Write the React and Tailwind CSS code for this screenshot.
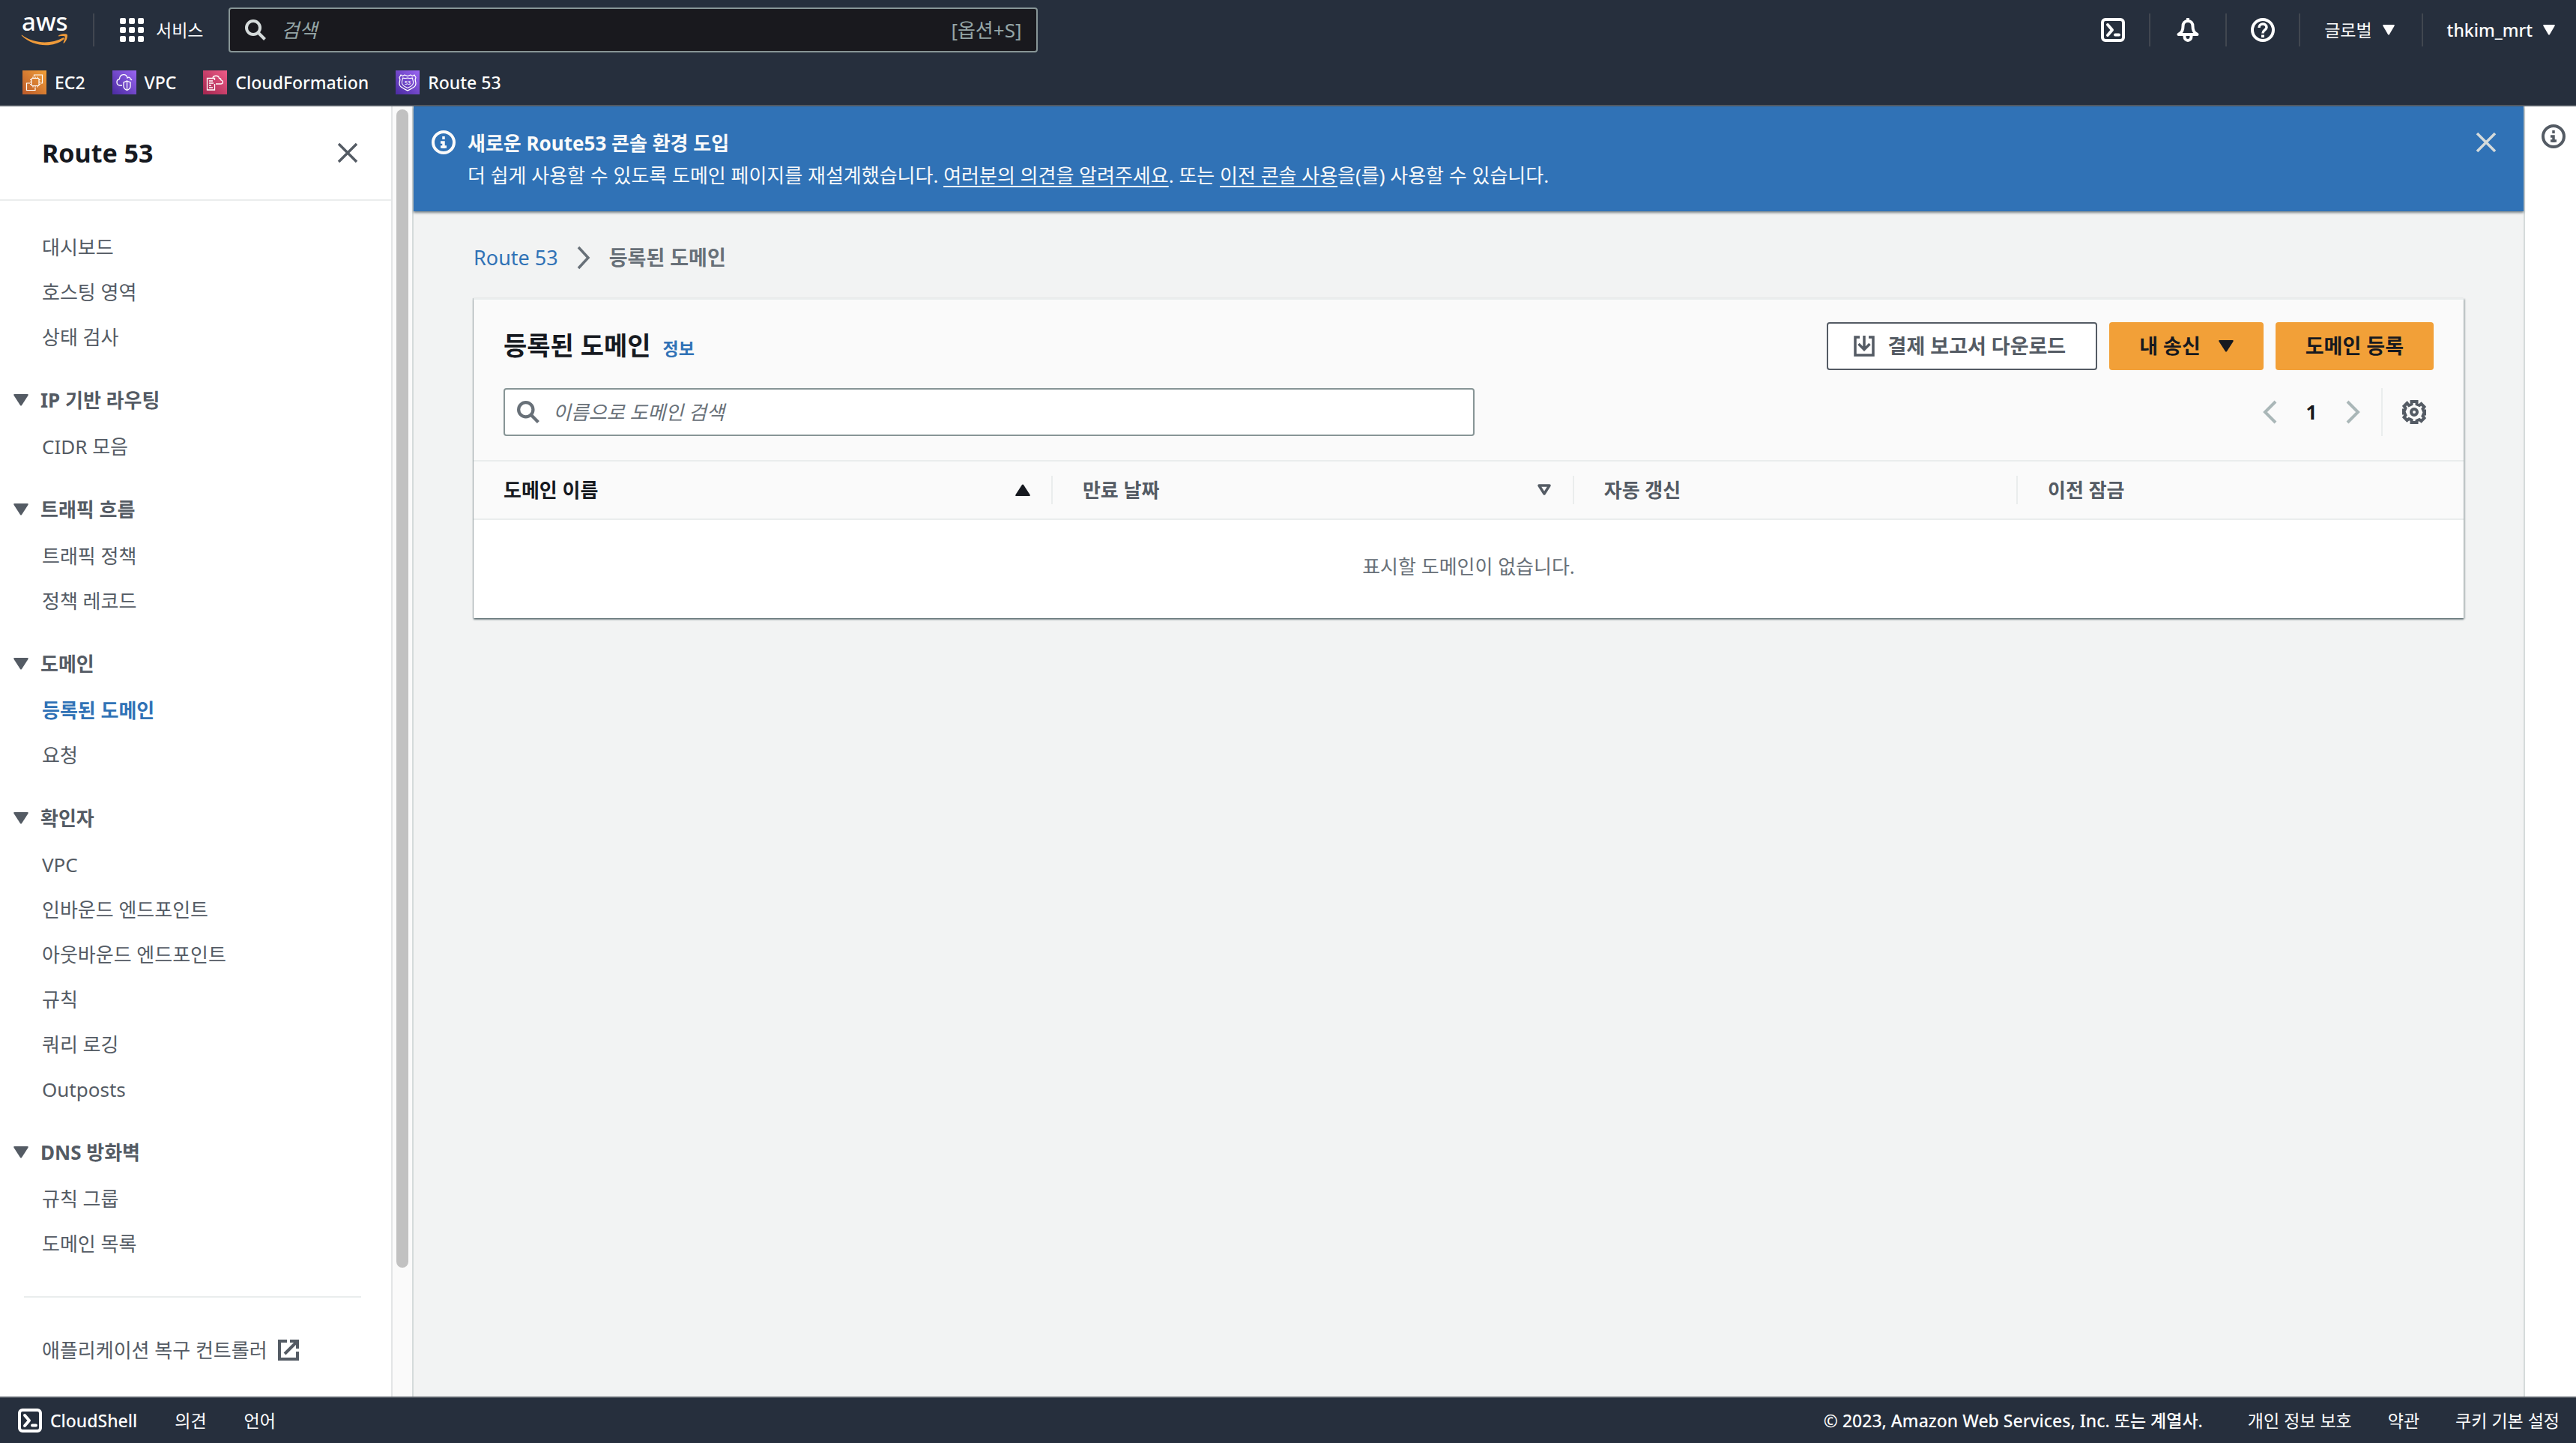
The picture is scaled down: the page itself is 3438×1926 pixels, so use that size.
import React from "react";

const Icon = ({ className = "size-8", children, box = "0 0 32 32" }) => (
  <svg viewBox={box} className={`shrink-0 ${className}`} fill="none" stroke="currentColor" strokeWidth="4" aria-hidden="true">
    {children}
  </svg>
);

const ShellIcon = () => (
  <Icon>
    <rect x="2" y="2" width="28" height="28" rx="4" />
    <path d="M9 9l6 7-6 7" strokeLinecap="round" strokeLinejoin="round" />
    <path d="M19 22.5h5" strokeLinecap="round" />
  </Icon>
);

const BellIcon = () => (
  <Icon>
    <path d="M16 0v4" />
    <path d="M16 4c-4.500 0-6.500 3-6.500 7 0 6-1.500 8-6 11h25c-4.500-3-6-5-6-11 0-4-2-7-6.500-7z" strokeLinejoin="round" />
    <path d="M11.500 22v3a4.500 5 0 0 0 9 0v-3" />
  </Icon>
);

const HelpIcon = () => (
  <Icon>
    <circle cx="16" cy="16" r="14" />
    <path d="M11 13c0-6.500 10-6.500 10-.5 0 3.500-5 3.500-5 8" strokeWidth="3.500" />
    <path d="M16 22.500v3.500" />
  </Icon>
);

const InfoIcon = () => (
  <Icon>
    <circle cx="16" cy="16" r="14" />
    <path d="M16 8v4M12 16h4v8M12 22h8" strokeWidth="3.500" />
  </Icon>
);

const CloseIcon = () => (
  <Icon className="size-7" box="0 0 28 28">
    <path d="M2 2l24 24M26 2L2 26" strokeWidth="3.500" />
  </Icon>
);

const SearchIcon = ({ className }) => (
  <Icon className={className} box="0 0 28 28">
    <circle cx="11" cy="11" r="9" />
    <path d="M17.500 17.500l9 9" />
  </Icon>
);

const Caret = ({ className = "h-3 w-4", up = false }) => (
  <svg viewBox="0 0 20 16" preserveAspectRatio="none" className={`shrink-0 ${className}`} fill="currentColor" aria-hidden="true">
    <path d={up ? "M1.500 16Q-.5 16 .6 14L9 1Q10 0 11 1L19.400 14Q20.500 16 18.500 16z" : "M1.500 0Q-.5 0 .6 2L9 15Q10 16 11 15L19.400 2Q20.500 0 18.500 0z"} />
  </svg>
);

const Ec2Icon = () => (
  <Icon>
    <defs>
      <linearGradient id="ec2" x1="0" y1="1" x2="1" y2="0">
        <stop offset="0" stopColor="#bb5a2b" />
        <stop offset="1" stopColor="#f2a038" />
      </linearGradient>
    </defs>
    <rect width="32" height="32" fill="url(#ec2)" stroke="none" />
    <g stroke="#fff" strokeWidth="1.200">
      <rect x="12" y="10.500" width="10" height="10" rx="1" />
      <path d="M14 8.500v2M17 8.500v2M20 8.500v2M14 20.500v2M17 20.500v2M20 20.500v2M10 12.500h2M10 15.500h2M10 18.500h2M22 12.500h2M22 15.500h2M22 18.500h2" />
      <path d="M15.500 8V6h11v11H24M10 17H5.500v9.500h11.500V23" />
    </g>
  </Icon>
);

const VpcIcon = () => (
  <Icon>
    <defs>
      <linearGradient id="violet" x1="0" y1="1" x2="1" y2="0">
        <stop offset="0" stopColor="#4a2aa0" />
        <stop offset="1" stopColor="#9a66f2" />
      </linearGradient>
    </defs>
    <rect width="32" height="32" fill="url(#violet)" stroke="none" />
    <g stroke="#fff" strokeWidth="1.300">
      <path d="M13 20H10c-5-.5-5.500-7.500-.5-8.500C10 4 19 4 20 10c2.500-2 4 0 4 1.500 1 0 1.500.8 2 1.500" />
      <path d="M19.500 14l4.500 2v5c0 3-2 4.500-4.500 5.500-2.500-1-4.500-2.500-4.500-5.500v-5zM19.500 14v12.500" />
    </g>
  </Icon>
);

const CloudFormationIcon = () => (
  <Icon>
    <defs>
      <linearGradient id="pink" x1="0" y1="1" x2="1" y2="0">
        <stop offset="0" stopColor="#a3264f" />
        <stop offset="1" stopColor="#ee5c88" />
      </linearGradient>
    </defs>
    <rect width="32" height="32" fill="url(#pink)" stroke="none" />
    <g stroke="#fff" strokeWidth="1.300">
      <path d="M15.500 18v8H5.500V10.500h10V13M8 14h5M8 17h6M8 20h3M8 23h5" />
      <path d="M13 10c1-4 8-3.500 8.500.5 2.500 0 2.500 2 2.500 2.500 3.500 1 3 5-.5 5H17" />
    </g>
  </Icon>
);

const Route53Icon = () => (
  <Icon>
    <rect width="32" height="32" fill="url(#violet)" stroke="none" />
    <g stroke="#fff" strokeWidth="1.300" strokeLinejoin="round">
      <path d="M7 6l2.500 1.500L12 6l4 1.500L20 6l2.500 1.500L25 6l2 3.500c-2 3 0 5 0 8 0 5-5 6-11 9.500-6-3.500-11-4.500-11-9.500 0-3 2-5 0-8z" />
      <path d="M9.500 10c3 1 4 .5 6.500 0 2.500.5 3.500 1 6.500 0 0 3 1.500 4 1 7-.5 4-4 4.500-7.500 6.500-3.500-2-7-2.500-7.500-6.500-.5-3 1-4 1-7z" strokeWidth="1.100" />
    </g>
    <text x="16" y="18.500" textAnchor="middle" fontSize="7" fill="#fff" stroke="none" fontFamily="Noto Sans, sans-serif">53</text>
  </Icon>
);

const VRule = () => <span className="h-11 w-0.5 bg-[#414750]" />;

const favorites = [
  ["EC2", Ec2Icon],
  ["VPC", VpcIcon],
  ["CloudFormation", CloudFormationIcon],
  ["Route 53", Route53Icon],
];

const sections = [
  { items: ["대시보드", "호스팅 영역", "상태 검사"] },
  { title: "IP 기반 라우팅", items: ["CIDR 모음"] },
  { title: "트래픽 흐름", items: ["트래픽 정책", "정책 레코드"] },
  { title: "도메인", items: ["등록된 도메인", "요청"] },
  { title: "확인자", items: ["VPC", "인바운드 엔드포인트", "아웃바운드 엔드포인트", "규칙", "쿼리 로깅", "Outposts"] },
  { title: "DNS 방화벽", items: ["규칙 그룹", "도메인 목록"] },
];

function Header() {
  return (
    <header className="border-b-2 border-[#545b64] bg-[#262f3d] text-[23px] leading-8 font-medium text-white">
      <div className="flex h-20 items-center pr-7 pl-7">
        <a href="#home" aria-label="AWS" className="shrink-0">
          <svg viewBox="0 -16 64 76" className="h-[76px] w-16" aria-hidden="true">
            <text x="1" y="23" fontSize="33" fontWeight="500" fill="#fff" fontFamily="Noto Sans, sans-serif">aws</text>
            <path d="M1 28.500C18 41 40 41 56 32.500c1.500-.6 2.500.8 1.200 2C43 46 17 45 1 29.800c-.6-.8 0-1.600 0-1.300z" fill="#ee9a3a" />
            <path d="M50 29.500c4-2.800 11-2.500 11.700-1.300.8 1.500-.2 8-4.200 11.300-.8.500-1.300.2-1-.6 1-2.500 2.800-7 2-8.200-1-1-5.500-.6-7.800-.3-1 0-1.200-.5-.7-.9z" fill="#ee9a3a" />
          </svg>
        </a>
        <span className="ml-8 h-11 w-0.5 bg-[#414750]" />
        <button type="button" className="ml-8.5 flex items-center gap-4 font-normal">
          <svg viewBox="0 0 32 32" className="size-8" fill="currentColor" aria-hidden="true">
            {[0, 12, 24].map((y) => [0, 12, 24].map((x) => <rect key={`${x}-${y}`} x={x} y={y} width="8" height="8" rx="2" />))}
          </svg>
          서비스
        </button>
        <label className="ml-8.5 flex h-[60px] w-[1080px] items-center rounded border-2 border-[#879596] bg-[#19191e] px-5 text-[26px] font-normal text-[#95a5a6]">
          <SearchIcon className="size-7 text-[#d5dbdb]" />
          <input type="search" aria-label="검색" placeholder="검색" className="ml-5 min-w-0 flex-1 bg-transparent outline-none placeholder:text-[#95a5a6] placeholder:italic" />
          <span>[옵션+S]</span>
        </label>
        <div className="ml-auto flex items-center">
          <button type="button" aria-label="CloudShell" className="mr-8"><ShellIcon /></button>
          <VRule />
          <button type="button" aria-label="알림" className="mx-8.5"><BellIcon /></button>
          <VRule />
          <button type="button" aria-label="도움말" className="mx-8"><HelpIcon /></button>
          <VRule />
          <button type="button" className="mr-9 ml-8 flex items-center gap-3.5 font-normal">글로벌 <Caret className="h-3.5 w-4" /></button>
          <VRule />
          <button type="button" className="ml-8 flex items-center gap-3.5">thkim_mrt <Caret className="h-3.5 w-4" /></button>
        </div>
      </div>
      <nav aria-label="즐겨찾기" className="flex h-[60px] items-center gap-9 pl-[30px]">
        {favorites.map(([name, Glyph]) => (
          <a key={name} href="#service" className="flex items-center gap-[11px]"><Glyph />{name}</a>
        ))}
      </nav>
    </header>
  );
}

function Sidebar() {
  return (
    <aside className="flex w-[550px] shrink-0 bg-white">
      <div className="flex-1">
        <div className="flex h-[126px] items-center justify-between border-b-2 border-[#eaeded] pr-11 pl-14">
          <h2 className="text-[34px] leading-10 font-bold text-[#16191f]">Route 53</h2>
          <button type="button" aria-label="닫기"><CloseIcon /></button>
        </div>
        <nav aria-label="Route 53" className="pt-8">
          {sections.map(({ title, items }) => (
            <div key={items[0]} className="mb-6">
              {title && (
                <button type="button" className="mb-0.5 flex h-[60px] items-center gap-4 pl-[18px] font-bold">
                  <Caret className="h-4 w-5" />
                  {title}
                </button>
              )}
              <ul>
                {items.map((item) => (
                  <li key={item}>
                    <a href="#nav" className={`flex h-[60px] items-center pl-14 ${item === "등록된 도메인" ? "font-bold text-[#3072b6]" : ""}`}>{item}</a>
                  </li>
                ))}
              </ul>
            </div>
          ))}
          <hr className="mx-8 mt-10 mr-10 border-t-2 border-[#eaeded]" />
          <a href="#recovery" className="mt-10 flex h-[60px] items-center gap-3.5 pl-14">
            애플리케이션 복구 컨트롤러
            <Icon className="size-7" box="0 0 28 28">
              <path d="M12 2H2v24h24V16M16 2h10v10M26 2L9 19" />
            </Icon>
          </a>
        </nav>
      </div>
      <div className="w-7 border-l-2 border-[#e3e5e6] bg-[#fafafa] px-1 pt-1">
        <div className="mx-auto h-[90%] w-4 rounded-full bg-[#c1c1c1]" />
      </div>
    </aside>
  );
}

function Banner() {
  return (
    <section className="relative flex h-[140px] items-start gap-4 bg-[#3072b6] px-6 pt-7 leading-[43px] text-[#fafafa] shadow-[0_2px_3px_rgba(0,20,30,0.5)]">
      <span className="mt-1"><InfoIcon /></span>
      <div className="flex-1">
        <h2 className="font-bold">새로운 Route53 콘솔 환경 도입</h2>
        <p>
          더 쉽게 사용할 수 있도록 도메인 페이지를 재설계했습니다. <a href="#feedback" className="underline decoration-2 underline-offset-4">여러분의 의견을 알려주세요</a>. 또는 <a href="#old" className="underline decoration-2 underline-offset-4">이전 콘솔 사용</a>을(를) 사용할 수 있습니다.
        </p>
      </div>
      <button type="button" aria-label="배너 닫기" className="mt-1.5 mr-3 text-[#d5dbdb]"><CloseIcon /></button>
    </section>
  );
}

const Column = ({ children, rule = true, className = "" }) => (
  <th scope="col" className={`p-0 text-left font-bold ${className}`}>
    <div className={`flex h-[38px] items-center justify-between pl-10 ${rule ? "border-r-2 border-[#eaeded] pr-7" : ""}`}>{children}</div>
  </th>
);

function DomainsCard() {
  return (
    <section className="border-t-2 border-[#eaeded] bg-white text-[#545b64] shadow-[0_2px_2px_rgba(0,28,36,0.5),2px_1px_2px_rgba(0,28,36,0.2),-1px_0_1px_rgba(0,28,36,0.2)]">
      <div className="bg-[#fafafa] px-10 pt-[30px] pb-8">
        <div className="flex h-16 items-center justify-between">
          <div className="flex items-baseline gap-4">
            <h1 className="text-[34px] leading-10 font-bold text-[#16191f]">등록된 도메인</h1>
            <a href="#info" className="text-[23px] font-bold text-[#3072b6]">정보</a>
          </div>
          <div className="flex gap-4 text-[27px] font-bold">
            <button type="button" className="flex h-16 items-center gap-4.5 rounded border-2 border-[#545b64] bg-white pr-10 pl-[34px]">
              <Icon className="size-7" box="0 0 28 28">
                <path d="M8 2H2v24h24V2h-6M14 0v17M6.500 11l7.500 7.500 7.500-7.500" strokeWidth="3.500" />
              </Icon>
              결제 보고서 다운로드
            </button>
            <button type="button" className="flex h-16 items-center gap-6 rounded bg-[#f2a038] px-10 text-[#16191f]">
              내 송신 <Caret className="h-4 w-5" />
            </button>
            <button type="button" className="h-16 rounded bg-[#f2a038] px-10 text-[#16191f]">도메인 등록</button>
          </div>
        </div>
        <div className="mt-6 flex items-center justify-between">
          <label className="flex h-16 w-[50.3%] items-center rounded border-2 border-[#879596] bg-white px-4 text-[#687078]">
            <SearchIcon className="size-7.5" />
            <input type="search" aria-label="도메인 검색" placeholder="이름으로 도메인 검색" className="ml-4.5 min-w-0 flex-1 bg-transparent outline-none placeholder:text-[#687078] placeholder:italic" />
          </label>
          <div className="flex items-center">
            <button type="button" aria-label="이전 페이지" className="text-[#aab7b8]">
              <Icon className="h-8 w-5" box="0 0 20 32"><path d="M17 2L3 16l14 14" /></Icon>
            </button>
            <button type="button" aria-current="page" className="w-[90px] font-bold text-[#16191f]">1</button>
            <button type="button" aria-label="다음 페이지" className="text-[#aab7b8]">
              <Icon className="h-8 w-5" box="0 0 20 32"><path d="M3 2l14 14L3 30" /></Icon>
            </button>
            <span className="ml-7 h-16 w-0.5 bg-[#eaeded]" />
            <button type="button" aria-label="설정" className="mr-2.5 ml-6.5">
              <Icon>
                <path d="M12.500 2h7v3.500l3.500 1.500 2.500-2 4 4-2 2.800 1.200 2.700H30v4h-1.300l-1.200 2.700 2 2.800-4 4-2.500-2-3.500 1.500V30h-7v-3.500L9 25l-2.500 2-4-4 2-2.800-1.200-2.700H2v-4h1.300l1.200-2.700-2-2.800 4-4L9 7l3.500-1.500z" />
                <circle cx="16" cy="16" r="4" />
              </Icon>
            </button>
          </div>
        </div>
      </div>
      <table className="w-full table-fixed border-collapse">
        <thead>
          <tr className="h-[78px] border-y-2 border-[#eaeded] bg-[#fafafa]">
            <Column className="w-[29.1%] text-[#16191f]">도메인 이름 <Caret up className="h-4 w-5" /></Column>
            <Column className="w-[26.2%]">
              만료 날짜
              <Icon className="h-4 w-5" box="0 0 20 16"><path d="M3 2h14l-7 11z" strokeWidth="3.500" strokeLinejoin="round" /></Icon>
            </Column>
            <Column className="w-[22.3%]">자동 갱신</Column>
            <Column rule={false}>이전 잠금</Column>
          </tr>
        </thead>
        <tbody>
          <tr>
            <td colSpan={4} className="h-[132px] pb-2 text-center text-[#687078]">표시할 도메인이 없습니다.</td>
          </tr>
        </tbody>
      </table>
    </section>
  );
}

export default function App() {
  return (
    <div className="flex min-h-screen flex-col bg-white font-['Noto_Sans','Noto_Sans_CJK_KR',sans-serif] text-[26px] leading-9 text-[#545b64]">
      <Header />
      <div className="flex flex-1">
        <Sidebar />
        <main className="min-w-0 flex-1 border-x-2 border-[#d5dbdb] bg-[#f2f3f3]">
          <Banner />
          <div className="px-20 pt-11">
            <nav aria-label="위치" className="mb-9 flex items-center gap-6 text-[27px] leading-9">
              <a href="#route53" className="text-[#3072b6]">Route 53</a>
              <Icon className="h-8 w-5 text-[#687078]" box="0 0 20 32"><path d="M3 2l13 14L3 30" strokeWidth="3.500" /></Icon>
              <span className="font-bold text-[#687078]">등록된 도메인</span>
            </nav>
            <DomainsCard />
          </div>
        </main>
        <aside className="w-[68px] shrink-0 pt-6 pl-5.5">
          <button type="button" aria-label="정보 패널 열기"><InfoIcon /></button>
        </aside>
      </div>
      <footer className="flex h-[62px] items-center justify-between border-t-2 border-[#545b64] bg-[#262f3d] pr-5.5 pl-6 text-[23px] leading-8 font-medium text-white">
        <div className="flex items-center gap-[50px]">
          <a href="#shell" className="flex items-center gap-[11px]"><ShellIcon />CloudShell</a>
          <a href="#feedback" className="font-normal">의견</a>
          <a href="#language" className="font-normal">언어</a>
        </div>
        <div className="flex items-center gap-12">
          <span className="mr-3">© 2023, Amazon Web Services, Inc. 또는 계열사.</span>
          <a href="#privacy" className="font-normal">개인 정보 보호</a>
          <a href="#terms" className="font-normal">약관</a>
          <a href="#cookies" className="font-normal">쿠키 기본 설정</a>
        </div>
      </footer>
    </div>
  );
}
